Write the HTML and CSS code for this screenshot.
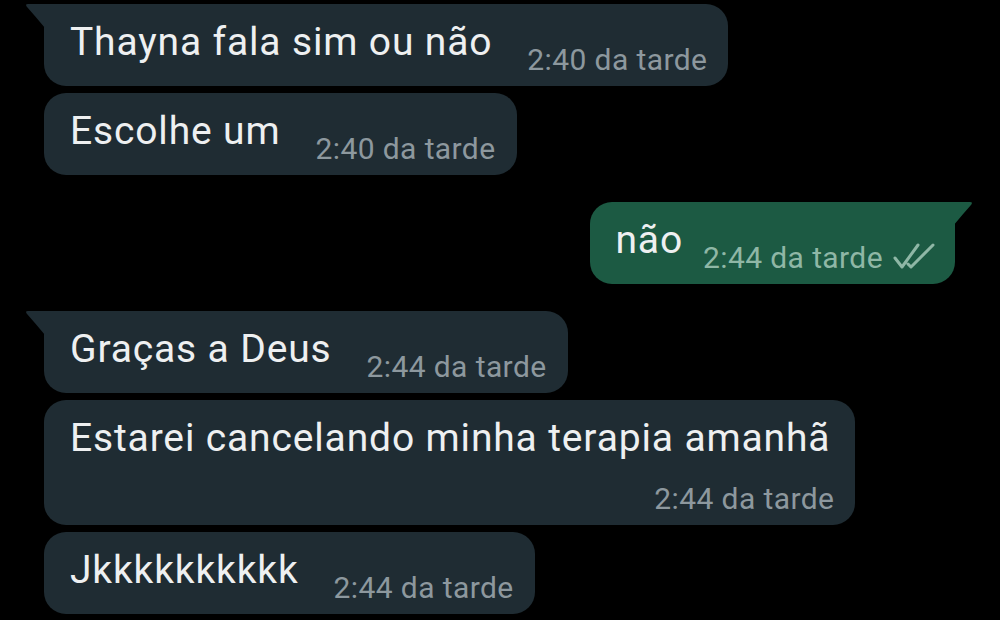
FILE: index.html
```html
<!DOCTYPE html>
<html lang="pt">
<head>
    <meta charset="UTF-8">
    <meta name="viewport" content="width=device-width, initial-scale=1.0">
    <title>Conversa</title>
    <link rel="stylesheet" href="styles.css">
</head>
<body>
    <div class="chat">
        <div class="bubble in tail">
            <svg class="tail-in" width="20" height="24" viewBox="0 0 20 24"><path d="M20 0 H3 Q0 0 1.6 2.4 Q11 13 20 24 Z"/></svg>
            <span class="text">Thayna fala sim ou não</span>
            <span class="meta">2:40 da tarde</span>
        </div>
        <div class="bubble in">
            <span class="text">Escolhe um</span>
            <span class="meta">2:40 da tarde</span>
        </div>

        <div class="bubble out tail group">
            <svg class="tail-out" width="20" height="24" viewBox="0 0 20 24"><path d="M0 0 H17 Q20 0 18.4 2.4 Q9 13 0 24 Z"/></svg>
            <span class="text">não</span>
            <span class="meta">2:44 da tarde
                <svg class="ticks" width="42" height="26" viewBox="0 0 42 26"><path d="M2 15 L9 24 L25 2 M15 21 L18 24 L40 2" /></svg>
            </span>
        </div>

        <div class="bubble in tail group">
            <svg class="tail-in" width="20" height="24" viewBox="0 0 20 24"><path d="M20 0 H3 Q0 0 1.6 2.4 Q11 13 20 24 Z"/></svg>
            <span class="text">Graças a Deus</span>
            <span class="meta">2:44 da tarde</span>
        </div>
        <div class="bubble in long">
            <span class="text">Estarei cancelando minha terapia amanhã</span>
            <span class="meta">2:44 da tarde</span>
        </div>
        <div class="bubble in">
            <span class="text">Jkkkkkkkkkk</span>
            <span class="meta">2:44 da tarde</span>
        </div>
    </div>
</body>
</html>
```

FILE: styles.css
```css
body {
    margin: 0;
    background: #000;
    font-family: Roboto, "Liberation Sans", sans-serif;
    overflow: hidden;
}
.chat {
    display: flex;
    flex-direction: column;
    align-items: flex-start;
    gap: 7px;
    padding: 4px 45px 0 44px;
}
.bubble {
    position: relative;
    display: flex;
    align-items: flex-start;
    gap: 35px;
    padding: 15px 21px 9px 26px;
    border-radius: 22px;
}
.bubble.group {
    margin-top: 20px;
}
.in {
    background: #1f2c33;
}
.out {
    align-self: flex-end;
    background: #1c5a43;
    gap: 20px;
    padding-left: 25px;
    padding-right: 20px;
}
.in.tail {
    border-top-left-radius: 0;
}
.out.tail {
    border-top-right-radius: 0;
}
.tail-in, .tail-out {
    position: absolute;
    top: 0;
}
.tail-in {
    left: -19px;
    fill: #1f2c33;
}
.tail-out {
    right: -18px;
    fill: #1c5a43;
}
.text {
    color: #eef0f1;
    font-size: 39px;
    line-height: 46px;
    letter-spacing: 0.85px;
    white-space: nowrap;
}
.meta {
    display: flex;
    align-items: center;
    gap: 13px;
    margin-top: 23px;
    color: #8d989e;
    font-size: 30px;
    line-height: 35px;
    letter-spacing: 0.4px;
    white-space: nowrap;
}
.out .meta {
    gap: 10px;
    color: #8fb7a6;
}
.ticks {
    fill: none;
    stroke: #8fb7a6;
    stroke-width: 3;
    stroke-linecap: round;
    stroke-linejoin: round;
    margin-top: -4px;
}
.long {
    flex-direction: column;
    align-items: stretch;
    gap: 0;
    padding-right: 25px;
}
.long .meta {
    align-self: flex-end;
    margin-top: 20px;
    margin-right: -4px;
}
```
